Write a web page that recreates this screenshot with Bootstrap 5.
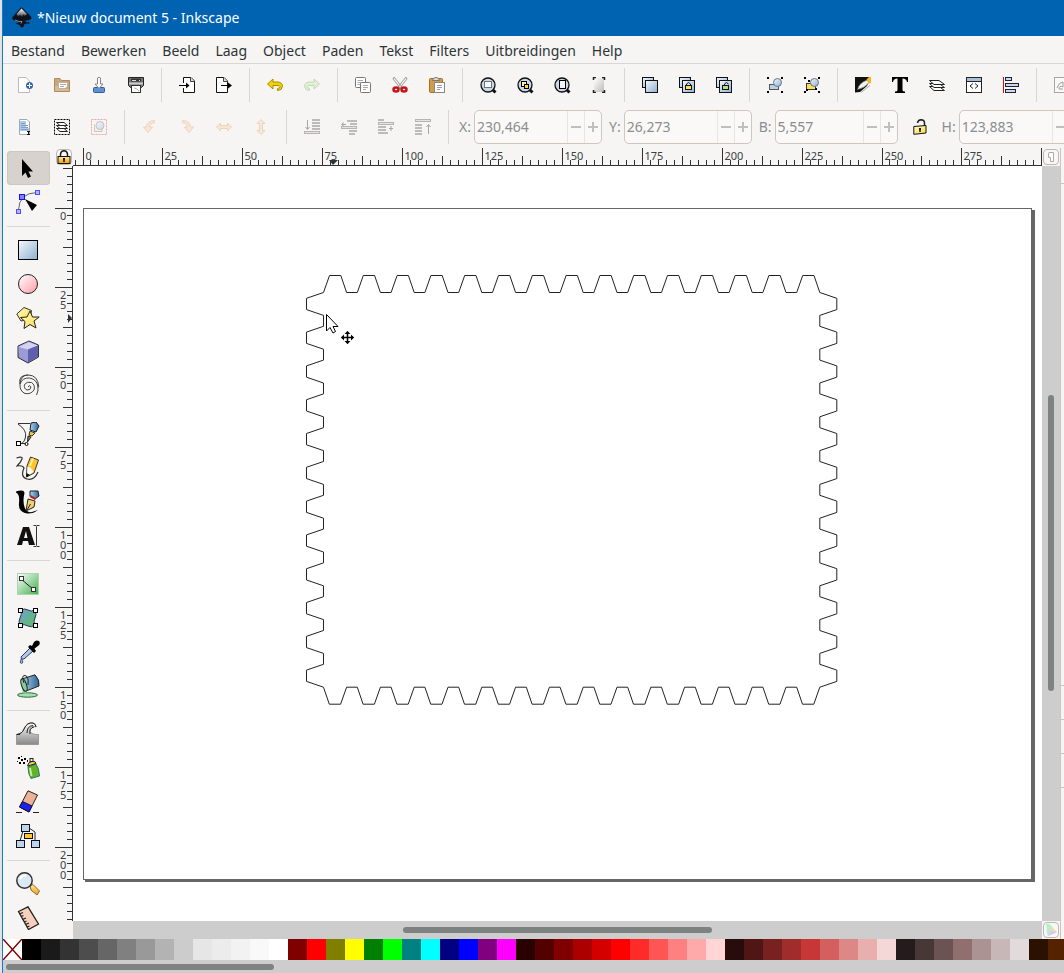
<!DOCTYPE html>
<html lang="nl">
<head>
<meta charset="utf-8">
<meta name="viewport" content="width=device-width, initial-scale=1">
<title>*Nieuw document 5 - Inkscape</title>
<link href="https://cdn.jsdelivr.net/npm/bootstrap@5.3.0/dist/css/bootstrap.min.css" rel="stylesheet">
<style>
  :root { --chrome:#f6f5f4; --line:#d9d7d5; --ink:#2e3436; --trough:#cdcdcd; --thumb:#7e8281; }
  body { font-family:"Noto Sans","Open Sans",sans-serif; font-size:14px; line-height:20px; color:var(--ink); background:#dfe3e6; }
  .app-window { margin-left:2px; border-left:1px solid #1a78bd; background:var(--chrome); }
  .title-bar { height:36px; background:#0063b1; color:#fff; padding-left:9px; margin-left:-1px; gap:4px; }
  .menu-bar { height:28px; padding:2px 8px 0; gap:16px; border-bottom:1px solid var(--line); }
  .menu-bar a { color:var(--ink); text-decoration:none; }
  .tool-row { height:42px; padding-left:5px; }
  .tool-btn { flex:none; width:37px; height:34px; padding:0 0 0 9px; border:0; border-radius:4px; background:none; display:flex; align-items:center; }
  .tool-btn:disabled { opacity:.4; }
  .rule-v { flex:none; width:1px; height:34px; margin:0 8px 0 5px; background:var(--line); }
  .faded { opacity:.35; }
  .unit-label { color:#8b8e8f; margin-right:3px; margin-left:7px; }
  .unit-label:first-of-type { margin-left:2px; }
  .spin { width:128px; flex:none; height:34px; border:1px solid #cdc7c2; border-radius:5px; background:#faf9f8; overflow:hidden; }
  .spin-narrow { width:123px; }
  .spin input { min-width:0; flex:1; border:0; background:none; color:#8b8e8f; padding:0 2px; }
  .spin button { flex:none; width:17px; border:0; border-left:1px solid #e8e6e4; background:none; padding:0; display:flex; align-items:center; justify-content:center; }
  .lock-toggle { width:14px; margin-left:15px; margin-right:8px; border:0; padding:0; background:none; }
  .work-area { min-height:791px; }
  .tool-box { flex:none; width:52px; padding:3px 0 4px 4px; }
  .tool-box button { display:flex; align-items:center; width:43px; height:34px; border:0; border-radius:4px; padding:0 0 0 9px; background:none; }
  .tool-box button.picked { background:#d8d2ce; box-shadow:inset 0 0 0 1px #cdc7c2; }
  .rule-h { height:1px; width:43px; margin:7px 0 6px; background:var(--line); }
  .drawing-grid { display:grid; flex:1; min-width:0; grid-template-columns:18px minmax(0,1fr) 18px; grid-template-rows:18px minmax(0,1fr) 18px; }
  .ruler-x, .ruler-y { overflow:hidden; min-width:0; min-height:0; position:relative; }
  .ruler-x { border-bottom:1px solid var(--ink); }
  .ruler-y { border-right:1px solid var(--ink); }
  .ruler-x svg, .ruler-y svg, .paper svg { position:absolute; inset:0; width:100%; height:100%; }
  .ruler-x text, .ruler-y text { font-size:11px; fill:#3a3f41; }
  .corner-btn { width:16px; height:16px; border:1px solid #bdb8b3; border-radius:4px; padding:0; background:#f8f7f6; display:flex; align-items:center; justify-content:center; margin:1px; }
  .paper { background:#fff; position:relative; overflow:hidden; min-height:0; }
  .trough-y { display:grid; grid-template-rows:229fr 296fr 230fr; background:var(--trough); justify-items:center; }
  .trough-x { grid-column:1 / 3; display:grid; grid-template-columns:330fr 309fr 330fr; background:var(--trough); align-items:center; margin-left:18px; }
  .thumb-y { grid-row:2; width:6px; border-radius:3px; background:var(--thumb); }
  .thumb-x { grid-column:2; height:6px; border-radius:3px; background:var(--thumb); }
  .dock-edge { flex:none; width:4px; border-left:1px solid #cbc5bf; }
  .dock-edge i { display:block; border-bottom:1px solid #cbc5bf; }
  .dock-a { height:36px; } .dock-b { height:502px; } .dock-c { height:34px; } .dock-d { height:34px; } .dock-e { height:34px; }
  .swatches { height:21px; overflow:hidden; background:var(--trough); }
  .swatches button { flex:none; width:19px; height:21px; border:0; padding:0; display:block; }
  .palette-scroll { height:13px; padding:4px 3px; background:var(--trough); }
  .palette-thumb { width:25.4%; min-width:100px; height:6px; border-radius:3px; background:var(--thumb); }
  svg { display:block; flex:none; }
</style>
</head>
<body>
<svg width="0" height="0" class="position-absolute" aria-hidden="true">
  <defs>
    <linearGradient id="gBlue" x1="0" y1="0" x2="1" y2="1"><stop offset="0" stop-color="#f4f8fc"/><stop offset="1" stop-color="#8fb0d3"/></linearGradient>
    <linearGradient id="gPink" x1="0" y1="0" x2="1" y2="1"><stop offset="0" stop-color="#fff"/><stop offset="1" stop-color="#ff9ba6"/></linearGradient>
    <linearGradient id="gYellow" x1="0" y1="0" x2="1" y2="1"><stop offset="0" stop-color="#fffbd0"/><stop offset="1" stop-color="#f8dc3c"/></linearGradient>
    <linearGradient id="gGold" x1="0" y1="0" x2="0" y2="1"><stop offset="0" stop-color="#ffe9a0"/><stop offset="1" stop-color="#f0a000"/></linearGradient>
    <linearGradient id="gGreen" x1="0" y1="0" x2="1" y2="1"><stop offset="0" stop-color="#fff"/><stop offset="1" stop-color="#3fae4a"/></linearGradient>
    <linearGradient id="gMesh" x1="0" y1="0" x2="1" y2="1"><stop offset="0" stop-color="#6f9fd8"/><stop offset="1" stop-color="#5cc05a"/></linearGradient>
    <linearGradient id="gSteel" x1="0" y1="0" x2="1" y2="0"><stop offset="0" stop-color="#b4d6f0"/><stop offset="1" stop-color="#2c6490"/></linearGradient>
    <linearGradient id="gWave" x1="0" y1="0" x2="0" y2="1"><stop offset="0" stop-color="#fff"/><stop offset=".6" stop-color="#b5b5b5"/><stop offset="1" stop-color="#888"/></linearGradient>
    <linearGradient id="gLogo" x1="0" y1="0" x2="0" y2="1"><stop offset="0" stop-color="#fff"/><stop offset=".6" stop-color="#8a8d94"/><stop offset="1" stop-color="#222"/></linearGradient>
    <linearGradient id="gGrey" x1="0" y1="0" x2="1" y2="1"><stop offset="0" stop-color="#fff"/><stop offset="1" stop-color="#bbb"/></linearGradient>
  </defs>
</svg>

<div class="app-window d-flex flex-column min-vh-100 overflow-hidden">
  <header class="title-bar d-flex align-items-center">
    <svg width="22" height="22" viewBox="0 0 22 22" aria-hidden="true"><path d="M11 .5L20 9.500Q21.500 12 18 13L13.500 14 17 16 13 17.500 12.500 20 10 20.500 8.500 18 4.500 16.500 8 15.500 2.500 13Q0 11.500 2 9.500L9 1.500Q10 0 11 .5Z" fill="#10131c"/><path d="M10.500 1.500L16 7 14 9 12.500 7.500 11 10 9 8 7 9.500 5.500 7Z" fill="url(#gLogo)"/><path d="M4 13L8 14.500H11L10 16.500" stroke="#9ab" fill="none" stroke-width=".8"/><circle cx="17.500" cy="16" r="1" fill="#10131c"/></svg>
    <span>*Nieuw document 5 - Inkscape</span>
  </header>

  <nav class="menu-bar d-flex align-items-center" aria-label="Menu">
    <a href="#">Bestand</a><a href="#">Bewerken</a><a href="#">Beeld</a><a href="#">Laag</a><a href="#">Object</a><a href="#">Paden</a><a href="#">Tekst</a><a href="#">Filters</a><a href="#">Uitbreidingen</a><a href="#">Help</a>
  </nav>

  <div class="tool-row d-flex align-items-center" role="toolbar" aria-label="Opdrachten">
    <button class="tool-btn" aria-label="Nieuw"><svg width="16" height="16"><path d="M1.500 .5H9L12.500 4V15.500H1.500Z" fill="#fff" stroke="#bbb"/><circle cx="12.500" cy="8.500" r="3.500" fill="#3465a4"/><path d="M12.500 6V11M10 8.500H15" stroke="#fff"/></svg></button>
    <button class="tool-btn" aria-label="Openen"><svg width="16" height="16"><path d="M.5 1.500H6L7.500 3.500H15.500V14.500H.5Z" fill="#c9a77c" stroke="#b08b5c"/><path d="M4.500 5.500H13.500V9.500L11 11.500H4.500Z" fill="#fff" stroke="#b9b2a6"/><path d="M6 7.500H12M6 9.500H10" stroke="#aaa"/><path d="M1 14V9H4V12H15V14Z" fill="#d8bb94"/></svg></button>
    <button class="tool-btn" aria-label="Opslaan"><svg width="16" height="16"><rect x="2.500" y="10.500" width="11" height="5" rx="1" fill="#5f92d0" stroke="#2f5c9a"/><path d="M6.500 1Q8 -.5 9.500 1V7H12L8 11.500 4 7H6.500Z" fill="#fafafa" stroke="#888"/></svg></button>
    <button class="tool-btn" aria-label="Afdrukken"><svg width="16" height="16"><path d="M.5 .5H15.500V8.500L13.500 10.500H2.500L.5 8.500Z" fill="#777" stroke="#222"/><path d="M3 1.500H13V4.500H3Z" fill="#333"/><path d="M4 3.500H8M11 3.500h1" stroke="#ddd"/><rect x="1" y="5.500" width="14" height="2" fill="#ccc"/><rect x="3.500" y="8.500" width="9" height="7" fill="#fff" stroke="#333"/><path d="M6 11l3 1 2 2" stroke="#9c9" fill="none"/></svg></button>
    <span class="rule-v"></span>
    <button class="tool-btn" aria-label="Importeren"><svg width="16" height="16"><path d="M4.500 6V.5H12L15.500 4V15.500H4.500V11" fill="#fff" stroke="#111"/><path d="M11.500 .5V4.500H15.500" fill="#ddd" stroke="#444"/><path d="M0 8.500H9" stroke="#000"/><path d="M7 5.500L10.500 8.500 7 11.500Z"/></svg></button>
    <button class="tool-btn" aria-label="Exporteren"><svg width="16" height="16"><path d="M.5 .5H8L11.500 4V15.500H.5Z" fill="#fff" stroke="#111"/><path d="M7.500 .5V4.500H11.500" fill="#ddd" stroke="#444"/><path d="M5 8.500H14" stroke="#000"/><path d="M12 5.500L16 8.500 12 11.500Z"/></svg></button>
    <span class="rule-v"></span>
    <button class="tool-btn" aria-label="Ongedaan maken"><svg width="16" height="16"><path d="M.5 7L6 2V5H11Q15.500 5.500 15.500 9.500 15 13.500 10.500 13.500V11.500Q13.500 11 13 9.500 12.500 8.500 11 8.500H6V12Z" fill="#edd400" stroke="#b08a00"/></svg></button>
    <button class="tool-btn" disabled aria-label="Opnieuw"><svg width="16" height="16"><path d="M15.500 7L10 2V5H5Q.5 5.500 .5 9.500 1 13.500 5.500 13.500V11.500Q2.500 11 3 9.500 3.500 8.500 5 8.500H10V12Z" fill="#c4e8b0" stroke="#77ad55"/></svg></button>
    <span class="rule-v"></span>
    <button class="tool-btn" aria-label="Kopiëren"><svg width="16" height="16"><g fill="#fff" stroke="#777"><rect x=".5" y=".5" width="10" height="10" rx="1"/><path d="M2.500 3.500H8M2.500 5.500H8M2.500 7.500H6" stroke="#aaa"/><rect x="5.500" y="5.500" width="10" height="10" rx="1"/><path d="M8 8.500H13M8 10.500H13M8 12.500H11" stroke="#aaa"/></g></svg></button>
    <button class="tool-btn" aria-label="Knippen"><svg width="16" height="16"><path d="M2 0L11 11 9 12 1 2ZM14 0L5 11 7 12 15 2Z" fill="#eee" stroke="#888" stroke-width=".8"/><g fill="none" stroke="#c8141a" stroke-width="2.500"><ellipse cx="4" cy="12.500" rx="2.500" ry="2"/><ellipse cx="12" cy="12.500" rx="2.500" ry="2"/></g></svg></button>
    <button class="tool-btn" aria-label="Plakken"><svg width="16" height="16"><rect x=".5" y="1.500" width="13" height="14" rx="1" fill="#d39b46" stroke="#a36f22"/><path d="M3.500 3.500Q4 .5 7 .5T10.500 3.500Z" fill="#ddd" stroke="#777"/><rect x="5.500" y="5.500" width="10" height="10" fill="#fff" stroke="#888"/><path d="M8 8.500H13M8 10.500H13M8 12.500H11" stroke="#999"/></svg></button>
    <span class="rule-v"></span>
    <button class="tool-btn" aria-label="Zoom selectie"><svg width="17" height="17"><path d="M12 12L15.500 15.500" stroke="#111" stroke-width="3"/><circle cx="8" cy="8" r="7" fill="#c9d8e8" stroke="#111" stroke-width="1.300"/><rect x="4.500" y="4.500" width="7" height="6" fill="#fff" stroke="#000" stroke-dasharray="1 1"/></svg></button>
    <button class="tool-btn" aria-label="Zoom tekening"><svg width="17" height="17"><path d="M12 12L15.500 15.500" stroke="#111" stroke-width="3"/><circle cx="8" cy="8" r="7" fill="#c9d8e8" stroke="#111" stroke-width="1.300"/><rect x="4.500" y="4.500" width="5" height="5" fill="#fff3a0" stroke="#000"/><rect x="7.500" y="7.500" width="4" height="4" fill="#ffd83c" stroke="#000"/></svg></button>
    <button class="tool-btn" aria-label="Zoom pagina"><svg width="17" height="17"><path d="M12 12L15.500 15.500" stroke="#111" stroke-width="3"/><circle cx="8" cy="8" r="7" fill="#c9d8e8" stroke="#111" stroke-width="1.300"/><rect x="5.500" y="3.500" width="6" height="8" fill="#f4f4f4" stroke="#000"/></svg></button>
    <button class="tool-btn" aria-label="Paginabreedte"><svg width="16" height="16"><rect x="3" y="1" width="10" height="14" fill="url(#gGrey)"/><path d="M2.500 3V.5H5M11 .5H13.500V3M2.500 13V15.500H5M11 15.500H13.500V13" fill="none" stroke="#222" stroke-width="1.500"/></svg></button>
    <span class="rule-v"></span>
    <button class="tool-btn" aria-label="Dupliceren"><svg width="16" height="16"><g fill="url(#gBlue)" stroke="#111"><rect x=".5" y=".5" width="11" height="10"/><rect x="3.500" y="3.500" width="12" height="12"/></g></svg></button>
    <button class="tool-btn" aria-label="Klonen"><svg width="16" height="16"><g fill="url(#gBlue)" stroke="#111"><rect x=".5" y=".5" width="11" height="10"/><rect x="3.500" y="3.500" width="12" height="12"/><path d="M7.500 9V7Q9.500 4 11.500 7V9" fill="none"/><rect x="6.500" y="8.500" width="6" height="4" fill="#ffe04a"/></g></svg></button>
    <button class="tool-btn" aria-label="Kloon ontkoppelen"><svg width="16" height="16"><g fill="url(#gBlue)" stroke="#111"><rect x=".5" y=".5" width="11" height="10"/><rect x="3.500" y="3.500" width="12" height="12"/><path d="M8.500 9V7Q10.500 4 12.500 7" fill="none"/><rect x="6.500" y="8.500" width="6" height="4" fill="#b7e07a"/></g></svg></button>
    <span class="rule-v"></span>
    <button class="tool-btn" aria-label="Groeperen"><svg width="16" height="16"><rect x="2.500" y="7.500" width="9" height="5" fill="#bcd0e6" stroke="#555"/><circle cx="10.500" cy="5.500" r="4" fill="url(#gBlue)" stroke="#678"/><path d="M0 0h2v2H0zM14 0h2v2h-2zM0 14h2v2H0zM14 14h2v2h-2z"/></svg></button>
    <button class="tool-btn" aria-label="Groep opheffen"><svg width="16" height="16"><rect x="2.500" y="6.500" width="9" height="6" fill="#ffdf50" stroke="#333"/><circle cx="10.500" cy="5.500" r="4" fill="url(#gBlue)" stroke="#678"/><path d="M0 0h2v2H0zM14 0h2v2h-2zM0 14h2v2H0zM14 14h2v2h-2zM4 3h2v2H4zM2 12h2v2H2zM11 11h2v2h-2z"/></svg></button>
    <span class="rule-v"></span>
    <button class="tool-btn" aria-label="Vulling en lijn"><svg width="16" height="16"><path d="M0 0H16L12 9 5 15 0 15.500Z" fill="#111"/><path d="M2.500 12.500Q4 6 12 3L14 5.500Q10 11 2.500 12.500Z" fill="#f1f1ee" stroke="#777" stroke-width=".6"/><path d="M11.500 2.500L14 0H16V6L14 6.500Z" fill="#f6b61e"/><path d="M6 15.500L15 8.500" stroke="#aaa" fill="none"/></svg></button>
    <button class="tool-btn" aria-label="Tekst"><svg width="16" height="16"><path d="M0 0H16V5H15Q14.500 1.500 10.500 1.500V13Q10.500 14.500 13 14.500V16H3V14.500Q5.500 14.500 5.500 13V1.500Q1.500 1.500 1 5H0Z"/></svg></button>
    <button class="tool-btn" aria-label="Lagen"><svg width="16" height="16"><g fill="#fff" stroke="#222"><path d="M.5 9.500H10L15.500 13.500H5Z"/><path d="M.5 6.500H10L15.500 10.500H5Z"/><path d="M.5 3.500H10L15.500 7.500H5Z"/></g></svg></button>
    <button class="tool-btn" aria-label="XML-editor"><svg width="16" height="16"><rect x=".5" y=".5" width="15" height="15" fill="#fff" stroke="#222"/><path d="M1 2.500H15" stroke="#aabfd8" stroke-width="3"/><path d="M1 4.500H15M7 6.500L4 9 7 11.500M9 6.500L12 9 9 11.500" fill="none" stroke="#222"/></svg></button>
    <button class="tool-btn" aria-label="Uitlijnen"><svg width="16" height="16"><path d="M.5 0V16" stroke="#d01010"/><g fill="#c8dbf0" stroke="#223"><rect x="2.500" y=".5" width="6" height="3"/><rect x="2.500" y="6.500" width="13" height="3"/><rect x="2.500" y="12.500" width="10" height="3"/></g></svg></button>
    <span class="rule-v"></span>
    <button class="tool-btn" disabled aria-label="Voorkeuren"><svg width="16" height="16"><rect x=".5" y=".5" width="15" height="15" fill="#fff" stroke="#333"/><path d="M3 11Q5 5 9 5V10Q5 8 5 12H9" fill="none" stroke="#222"/></svg></button>
  </div>

  <div class="tool-row d-flex align-items-center" role="toolbar" aria-label="Selectie">
    <button class="tool-btn" aria-label="Alles selecteren"><svg width="16" height="16"><path d="M2.500 .5H10L12.500 3V15.500H2.500Z" fill="#fff" stroke="#9ab"/><path d="M3 2H9V9H12V12H3Z" fill="#b4cae4"/><path d="M4 4.500H8M4 6.500H11M4 8.500H11M4 10.500H11" stroke="#7d9ec8"/><path d="M10 12.500H13M10 15.500H13M11.500 12V16" stroke="#111"/></svg></button>
    <button class="tool-btn" aria-label="Alles in alle lagen"><svg width="16" height="16"><rect x=".5" y=".5" width="15" height="15" fill="none" stroke="#000" stroke-dasharray="2 1"/><g fill="#fff" stroke="#222"><path d="M2.500 9.500H10L13.500 12.500H6Z"/><path d="M2.500 6.500H10L13.500 9.500H6Z"/><path d="M2.500 3.500H10L13.500 6.500H6Z"/></g></svg></button>
    <button class="tool-btn" disabled aria-label="Deselecteren"><svg width="16" height="16"><rect x=".5" y=".5" width="15" height="15" fill="none" stroke="#e03030" stroke-dasharray="2 1"/><path d="M3.500 5.500V12.500H11V10" fill="#ffe9b0" stroke="#887"/><circle cx="9" cy="6.500" r="4" fill="url(#gBlue)" stroke="#678"/></svg></button>
    <span class="rule-v"></span>
    <button class="tool-btn" disabled aria-label="Linksom draaien"><svg width="16" height="16"><path d="M13 1.500Q5 1.500 4.500 8H1.500L6 13.500 10.500 8H7.500Q7.500 4 13 3.500" fill="#ffd3a8" stroke="#e0a070"/></svg></button>
    <button class="tool-btn" disabled aria-label="Rechtsom draaien"><svg width="16" height="16"><path d="M3 1.500Q11 1.500 11.500 8H14.500L10 13.500 5.500 8H8.500Q8.500 4 3 3.500" fill="#ffd3a8" stroke="#e0a070"/></svg></button>
    <button class="tool-btn" disabled aria-label="Horizontaal spiegelen"><svg width="16" height="16"><path d="M.5 8L4.500 4V6.500H11.500V4L15.500 8 11.500 12V9.500H4.500V12Z" fill="#ffd3a8" stroke="#e0a070"/></svg></button>
    <button class="tool-btn" disabled aria-label="Verticaal spiegelen"><svg width="16" height="16"><path d="M8 .5L12 4.500H9.500V11.500H12L8 15.500 4 11.500H6.500V4.500H4Z" fill="#ffd3a8" stroke="#e0a070"/></svg></button>
    <span class="rule-v"></span>
    <button class="tool-btn" disabled aria-label="Naar onderen"><svg width="16" height="16"><path d="M3.500 1V10M1.500 8L3.500 10.500 5.500 8" stroke="#333" fill="none"/><path d="M8 1H16M8 4H16M8 7H16M8 10H16" stroke="#666" stroke-width="2"/><rect x=".5" y="12.500" width="15" height="2" fill="#e8cbb0" stroke="#555"/></svg></button>
    <button class="tool-btn" disabled aria-label="Omlaag"><svg width="16" height="16"><path d="M1 5.500H5M3 3.500L.5 5.500 3 7.500" stroke="#333" fill="none"/><path d="M6 2H16M9 5H16M8 12H16M8 15H14" stroke="#666" stroke-width="2"/><rect x=".5" y="7.500" width="15" height="2" fill="#ccc" stroke="#555"/></svg></button>
    <button class="tool-btn" disabled aria-label="Omhoog"><svg width="16" height="16"><path d="M11 9.500H15M13 7V12" stroke="#333"/><path d="M0 1H6M0 8H8M0 11H8M0 14H10" stroke="#666" stroke-width="2"/><rect x=".5" y="3.500" width="15" height="2" fill="#ccc" stroke="#555"/></svg></button>
    <button class="tool-btn" disabled aria-label="Naar boven"><svg width="16" height="16"><path d="M13.500 15V6M11.500 8L13.500 5.500 15.500 8" stroke="#333" fill="none"/><path d="M0 6H7M0 9H7M0 12H7M0 15H7" stroke="#666" stroke-width="2"/><rect x=".5" y=".5" width="15" height="2" fill="#ccc" stroke="#555"/></svg></button>
    <span class="rule-v"></span>
    <label class="unit-label" for="posX">X:</label>
    <div class="spin d-flex"><input id="posX" type="text" value="230,464" disabled><button disabled aria-label="X min"><svg width="10" height="10" class="faded"><path d="M0 5H10" stroke="#555" stroke-width="2"/></svg></button><button disabled aria-label="X plus"><svg width="10" height="10" class="faded"><path d="M0 5H10M5 0V10" stroke="#555" stroke-width="2"/></svg></button></div>
    <label class="unit-label" for="posY">Y:</label>
    <div class="spin d-flex"><input id="posY" type="text" value="26,273" disabled><button disabled aria-label="Y min"><svg width="10" height="10" class="faded"><path d="M0 5H10" stroke="#555" stroke-width="2"/></svg></button><button disabled aria-label="Y plus"><svg width="10" height="10" class="faded"><path d="M0 5H10M5 0V10" stroke="#555" stroke-width="2"/></svg></button></div>
    <label class="unit-label" for="sizeB">B:</label>
    <div class="spin spin-narrow d-flex"><input id="sizeB" type="text" value="5,557" disabled><button disabled aria-label="B min"><svg width="10" height="10" class="faded"><path d="M0 5H10" stroke="#555" stroke-width="2"/></svg></button><button disabled aria-label="B plus"><svg width="10" height="10" class="faded"><path d="M0 5H10M5 0V10" stroke="#555" stroke-width="2"/></svg></button></div>
    <button class="lock-toggle flex-shrink-0" aria-label="Verhouding vergrendelen"><svg width="14" height="16"><path d="M4.500 4Q5 1 8 .8 11.500 1 11.500 4V7" fill="none" stroke="#222" stroke-width="1.500"/><path d="M.8 7.500L13 6.500V14L.8 15.300Z" fill="url(#gYellow)" stroke="#111"/><path d="M7 9V13M6 10H8" stroke="#111" stroke-width="1.500"/></svg></button>
    <label class="unit-label" for="sizeH">H:</label>
    <div class="spin d-flex"><input id="sizeH" type="text" value="123,883" disabled><button disabled aria-label="H min"><svg width="10" height="10" class="faded"><path d="M0 5H10" stroke="#555" stroke-width="2"/></svg></button><button disabled aria-label="H plus"><svg width="10" height="10" class="faded"><path d="M0 5H10M5 0V10" stroke="#555" stroke-width="2"/></svg></button></div>
  </div>

  <main class="work-area d-flex flex-grow-1">
    <div class="tool-box" role="toolbar" aria-label="Gereedschap">
      <button class="picked" aria-label="Selecteren"><svg width="24" height="24"><path d="M6 3V20L9.500 16.500 12 22 15 20.500 12.500 15.500H17Z" fill="#000"/></svg></button>
      <button aria-label="Knooppunten"><svg width="24" height="24"><path d="M2.500 20Q3 3 21 2.500" fill="none" stroke="#666"/><g fill="#b5b5ff" stroke="#5050ee"><rect x="19.500" y=".5" width="4" height="4"/><rect x=".5" y="19.500" width="4" height="4"/></g><rect x="3.500" y="4.500" width="5" height="5" fill="#8080ff" stroke="#1515dd"/><path d="M9 9L21 15 16 21Z"/></svg></button>
      <div class="rule-h"></div>
      <button aria-label="Rechthoek"><svg width="24" height="24"><rect x="2.500" y="2.500" width="19" height="19" fill="url(#gBlue)" stroke="#000"/></svg></button>
      <button aria-label="Ellips"><svg width="24" height="24"><circle cx="12" cy="12" r="9.500" fill="url(#gPink)" stroke="#222"/></svg></button>
      <button aria-label="Ster"><svg width="24" height="24"><path d="M8 1.500L15.500 4.500 14 13 5 15 .8 8Z" fill="url(#gYellow)" stroke="#333"/><path d="M14 5L16.500 11 23.200 11 18 15 20 22 14 18.500 8 22.500 9 15.500 4.500 11.500 11 11Z" fill="url(#gYellow)" stroke="#222"/></svg></button>
      <button aria-label="3D-kubus"><svg width="24" height="24"><path d="M13 1L22.500 5V17L12 23 2 17.500V6Z" fill="#8484c8" stroke="#333"/><path d="M2.500 6.500L13 1.500V15L3 17Z" fill="#a9a9e2"/><path d="M3 7L12 9.500V22L3 17Z" fill="#9b9bd8"/><path d="M3 7L13 2 22 5.500 12 9.500Z" fill="#d3d3f5"/><path d="M12 9.500L22 5.500V16.500L12 22.500Z" fill="#5f5fae"/></svg></button>
      <button aria-label="Spiraal"><svg width="24" height="24"><path d="M12 13Q13.500 10.500 15 13 14.500 16.500 11 16 7.500 14.500 8.500 10.500 11 7 15.500 8.500 19.500 11 18 16 15 20.500 9 19.500 3.500 17 4 10 6.500 3.500 13.500 4 21.500 5.500 22 13.500M22 13Q22.500 17 20.500 21M4 10Q5 1 12 1 22 1 22.800 13M4 10Q2 1 12 1" fill="none" stroke="#444"/></svg></button>
      <div class="rule-h"></div>
      <button aria-label="Pen"><svg width="24" height="24"><path d="M2 1.500H14M2 2Q11 8 9.500 15T4 21.500H10" fill="none" stroke="#333"/><rect x=".5" y="19.500" width="4" height="4" fill="#fff" stroke="#000"/><circle cx="10.500" cy="22" r="1.500" fill="#fff" stroke="#000"/><path d="M15 1L20 0 23 4 20 10 14 8Z" fill="url(#gSteel)" stroke="#123"/><path d="M14 9L19 11 16 14 13 13Z" fill="#f6c63c" stroke="#333"/><path d="M12 14L15 15 11.500 20Z" fill="#8a8a55" stroke="#222"/></svg></button>
      <button aria-label="Potlood"><svg width="24" height="24"><path d="M.5 2Q7 0 6 3T1 10Q7 9 8 12Q4 21 11 23T22 16" fill="none" stroke="#333" stroke-width="1.200"/><path d="M14.500 1L22.500 4 18 17 10.500 21 11 10Z" fill="#ffc331" stroke="#333"/><path d="M11.500 11Q14 10 17.500 16L11 20Z" fill="#fff"/><path d="M17 2.500L14 10" stroke="#fff0a0" stroke-width="2"/><path d="M10.500 17V21L14 19Z"/></svg></button>
      <button aria-label="Kalligrafie"><svg width="24" height="24"><path d="M0 1.500Q8-1 8.500 3 6.500 11 8.500 17T16 22L22 20Q17 24 11 23.500 2 22 3 13 4 4 0 2.500Z"/><path d="M14 1H22L23 6 19 9 14 6Z" fill="url(#gSteel)" stroke="#123"/><path d="M14 6L19.500 9" stroke="#c02020" stroke-width="2"/><path d="M12 9L19 11 18 17 10 21Z" fill="#f4d070" stroke="#222"/><path d="M11 20L14.500 14" stroke="#222"/></svg></button>
      <button aria-label="Teksttool"><svg width="24" height="24"><path d="M7 3H13L19 21H13L12 17H7L6 21H1ZM8 14H11.500L10 7Z" fill-rule="evenodd" fill="#111"/><path d="M17.500 1.500H20L20.500 2.500 21 1.500H23.500M17.500 22.500H20L20.500 21.500 21 22.500H23.500M20.500 3V21" fill="none" stroke="#333"/></svg></button>
      <div class="rule-h"></div>
      <button aria-label="Kleurverloop"><svg width="24" height="24"><rect x="1.500" y="1.500" width="21" height="21" fill="url(#gGreen)" stroke="#a9d6ac"/><path d="M5 7L18 18" stroke="#222"/><rect x="3.500" y="4.500" width="4" height="4" fill="#fff" stroke="#333"/><rect x="15.500" y="15.500" width="4" height="4" fill="#fff" stroke="#333"/></svg></button>
      <button aria-label="Raster"><svg width="24" height="24"><path d="M5 4Q9 2 12 4T19 4Q21 9 19 12T19 19Q15 22 12 20T4 19Q2 15 4 12T5 4Z" fill="url(#gMesh)" stroke="#336"/><g fill="#fff" stroke="#000"><rect x="2.500" y="2.500" width="4" height="4"/><rect x="17.500" y="2.500" width="4" height="4"/><rect x="2.500" y="17.500" width="4" height="4"/><rect x="17.500" y="17.500" width="4" height="4"/></g></svg></button>
      <button aria-label="Pipet"><svg width="24" height="24"><path d="M14 8L17 11 8 19 5.500 19 5 17Z" fill="#a9cbee" stroke="#335"/><path d="M12 7L14 5 16 6 18 2Q20-.5 23 1 25 4 22 6L18.500 8.500 20 11 18 13Z"/><path d="M5.500 18.500Q8 23 5.500 23.500 3 23 5.500 18.500Z" fill="#8cb5e4" stroke="#457"/></svg></button>
      <button aria-label="Vullen"><svg width="24" height="24"><ellipse cx="11.500" cy="21" rx="10" ry="2.200" fill="#a8dfb0" stroke="#2b6a3a"/><path d="M8 14Q5 16 8 20L11 20Q9 17 11 14Z" fill="#77c987"/><path d="M6 5L19 .8Q24 6 23 12L10 17Z" fill="url(#gSteel)" stroke="#222"/><ellipse cx="8" cy="11" rx="2.500" ry="6.500" transform="rotate(-18 8 11)" fill="#7fcf98" stroke="#222"/><path d="M8 9Q5 1 9 1.500T12 11" fill="none" stroke="#222"/></svg></button>
      <div class="rule-h"></div>
      <button aria-label="Boetseren"><svg width="24" height="24"><path d="M.5 12.500Q6 12 8 7 11 0 17 1 20 2 20 5 17 3 14.500 5.500 12 10 17 12 19 12.500 22.500 12.500V22.500H.5Z" fill="url(#gWave)" stroke="#999"/><path d="M.5 12.500Q6 12 8 7 11 0 17 1 20 2 20 5M11 11Q11 4 17 3.500M14 12Q13 6 18 5M1 12.500H4" fill="none" stroke="#222"/></svg></button>
      <button aria-label="Verstuiven"><svg width="24" height="24"><path d="M2 1h2v2H2zM5 3h2v2H5zM8 2h2v2H8zM3 6h2v2H3zM7 6h2v2H7zM11 4h1v2h-1zM5 0h1v1H5zM1 5h1v1H1z"/><path d="M12 11L20 8Q23 12 23.500 20L15 22.500Q12 18 12 11Z" fill="#62b22a" stroke="#376"/><path d="M14 12L15.500 20" stroke="#c6f09a" stroke-width="2"/><path d="M11.500 10Q12 6 16 5.500T20 7.500Z" fill="#ffda40" stroke="#222"/><rect x="14" y="2.500" width="3" height="3" fill="#eee" stroke="#222"/></svg></button>
      <button aria-label="Gum"><svg width="24" height="24"><path d="M12 .8L21.500 5 13 22 3.500 17Z" fill="#efb195" stroke="#222"/><path d="M6.500 11.500L16 16 13 22 3.500 17Z" fill="#2020ee" stroke="#113"/><path d="M0 22.500H6M17 22.500H23" stroke="#222"/></svg></button>
      <button aria-label="Verbinden"><svg width="24" height="24"><path d="M7 7L4 17M13 4L19 8V17" stroke="#222" fill="none"/><g fill="#bdd4ee" stroke="#111"><rect x="5.500" y=".5" width="8" height="7"/><rect x=".5" y="16.500" width="8" height="7"/><rect x="15.500" y="16.500" width="8" height="7"/><rect x="8.500" y="9.500" width="8" height="5" fill="#ffc92e"/></g></svg></button>
      <div class="rule-h"></div>
      <button aria-label="Zoom"><svg width="24" height="24"><path d="M14 14L17 12.500 23.500 19 21 23 15 18Z" fill="url(#gGold)" stroke="#863"/><circle cx="8.500" cy="8.500" r="7.700" fill="#dce8f5" stroke="#333" stroke-width="1.500"/><path d="M4 7Q6 3 10 3.500" stroke="#fff" stroke-width="2" fill="none"/></svg></button>
      <button aria-label="Meten"><svg width="24" height="24"><path d="M2.500 5.500L12 .8 22.500 18 12.500 23.500Z" fill="#f7cfbd" stroke="#222" stroke-width="1.300"/><path d="M3.500 8L7 6.500M5 10.500L7.500 9.500M6.500 13.500L10 12M8 16L10.500 15M9.500 18.500L13 17M11 21L13.500 20" stroke="#222" stroke-width="1.300"/></svg></button>
    </div>

    <div class="drawing-grid">
      <button class="corner-btn" aria-label="Hulplijnen vergrendelen"><svg width="14" height="14"><path d="M3.500 7V4Q4 .8 7 .8T10.500 4V7" fill="none" stroke="#222" stroke-width="1.500"/><rect x="1" y="6.500" width="12" height="7" fill="url(#gGold)" stroke="#111"/><path d="M7 8V12M6 9H8" stroke="#111" stroke-width="1.500"/></svg></button>
      <div class="ruler-x"><svg id="rulerX"></svg></div>
      <button class="corner-btn" aria-label="Zoom bij schalen"><svg width="10" height="12"><path d="M3 1.500H7.500V10.500H4.500V6.500H2.500V3Z" fill="#fff" stroke="#aaa"/></svg></button>

      <div class="ruler-y"><svg id="rulerY"></svg></div>
      <div class="paper">
        <svg role="img" aria-label="Tekening">
          <path d="M959 44H962V716H12V714H959Z" fill="#666"/>
          <rect x="10.500" y="42.500" width="948" height="671" fill="#fff" stroke="#666"/>
          <path id="boxOutline" fill="none" stroke="#222"/>
          <path d="M253.500 148.500V165L257 161.500 260 167 262.500 165.500 260 160.500H265Z" fill="#fff" stroke="#000"/>
          <path d="M268.500 171.500H280.500M274.500 165.500V177.500" stroke="#000" stroke-width="1.500"/>
          <path d="M268 171.500L271 168.500V174.500ZM281 171.500L278 168.500V174.500ZM274.500 165L271.500 168H277.500ZM274.500 178L271.500 175H277.500Z"/>
        </svg>
      </div>
      <div class="trough-y"><div class="thumb-y"></div></div>

      <div class="trough-x"><div class="thumb-x"></div></div>
      <button class="corner-btn" aria-label="Kleurbeheer"><svg width="14" height="14"><path d="M2 1Q6 0 9 5L13 9 4 13Z" fill="#b8f0c0"/><path d="M7 4L13 9 6 9Z" fill="#f5d9b5"/><path d="M4 13L13 9 6 8Z" fill="#d5c3f5"/><path d="M2 7L4 13 7 9Z" fill="#b5e8f5"/></svg></button>
    </div>
    <aside class="dock-edge" aria-hidden="true"><i class="dock-a"></i><i class="dock-b"></i><i class="dock-c"></i><i class="dock-d"></i><i class="dock-e"></i></aside>
  </main>

  <div class="swatches d-flex" id="swatches" role="toolbar" aria-label="Palet">
    <button aria-label="Geen kleur"><svg width="19" height="21"><rect width="19" height="21" fill="#fff"/><path d="M0 0L19 21M19 0L0 21" stroke="#800000" stroke-width="1.500"/></svg></button>
  </div>
  <div class="palette-scroll"><div class="palette-thumb"></div></div>
</div>

<script src="https://cdn.jsdelivr.net/npm/bootstrap@5.3.0/dist/js/bootstrap.bundle.min.js"></script>
<script>
  // Rulers: a tick every 2.5 mm, a longer one every 12.5 mm, a labelled one every 25 mm.
  const step = 7.99;
  function ruler(id, origin, first, last, horizontal) {
    let ticks = '', labels = '';
    for (let i = first; i <= last; i++) {
      const p = Math.floor(origin + i * step) + 0.5;
      const major = i % 10 === 0, len = major ? 17 : i % 5 === 0 ? 9 : 5;
      ticks += horizontal ? `M${p} 17V${17 - len}` : `M17 ${p}H${17 - len}`;
      if (!major || (horizontal && i >= 120)) continue;
      const value = String(i * 2.5);
      if (horizontal) labels += `<text x="${p + 2}" y="12">${value}</text>`;
      else labels += '<text>' + [...value].map((d, k) => `<tspan x="5" y="${p + 11 + 10 * k}">${d}</tspan>`).join('') + '</text>';
    }
    const mark = horizontal ? 'M256 12H265L260 17Z' : 'M13 148V157L17 152Z';
    document.getElementById(id).innerHTML = `<path d="${ticks}" stroke="#2e3436"/>${labels}<path d="${mark}" fill="#2e3436"/>`;
  }
  ruler('rulerX', 10, -1, 120, true);
  ruler('rulerY', 42, -5, 89, false);

  // Finger-joint outline: 15 teeth along the width, 12 along the height.
  const run = (n, tooth, gap) => Array(n).fill(tooth).join(gap);
  document.getElementById('boxOutline').setAttribute('d', 'M250.5 126.500' +
    run(15, 'l6 -17h11.300l5.800 17', 'h10.700') +
    run(12, 'l17 5.800v11.300l-17 5.800', 'v10.900') +
    run(15, 'l-6 17h-11.300l-5.800 -17', 'h-10.700') +
    run(12, 'l-17 -5.800v-11.300l17 -5.800', 'v-10.900'));

  const colors = ('000000 1a1a1a 333333 4d4d4d 666666 808080 999999 b3b3b3 cccccc e6e6e6 ececec f2f2f2 f9f9f9 ffffff ' +
    '800000 ff0000 808000 ffff00 008000 00ff00 008080 00ffff 000080 0000ff 800080 ff00ff ' +
    '2b0000 550000 800000 aa0000 d40000 ff0000 ff2a2a ff5555 ff8080 ffaaaa ffd5d5 ' +
    '280b0b 501616 782121 a02c2c c83737 d35f5f de8787 e9afaf f4d7d7 ' +
    '241c1c 483737 6c5353 916f6f ac9393 c8b7b7 e3dbdb 2b1100 552200').split(' ');
  const bar = document.getElementById('swatches');
  colors.forEach(c => {
    const b = document.createElement('button');
    b.style.backgroundColor = '#' + c;
    b.setAttribute('aria-label', '#' + c);
    bar.append(b);
  });
</script>
</body>
</html>
